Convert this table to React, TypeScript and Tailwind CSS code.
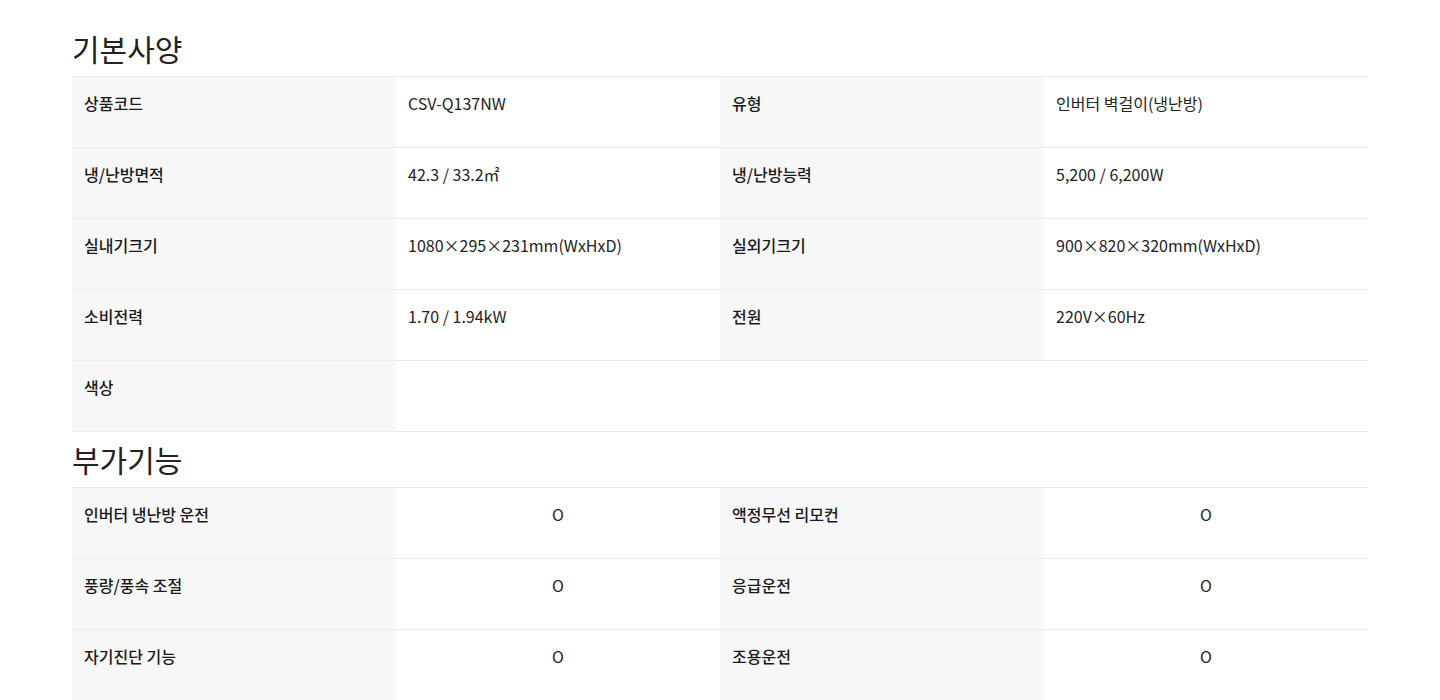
const FONT = "font-['Noto_Sans_CJK_KR','Noto_Sans',sans-serif]";

type Cell = { label: string; value?: string };

const specs: Cell[][] = [
  [
    { label: '상품코드', value: 'CSV-Q137NW' },
    { label: '유형', value: '인버터 벽걸이(냉난방)' },
  ],
  [
    { label: '냉/난방면적', value: '42.3 / 33.2㎡' },
    { label: '냉/난방능력', value: '5,200 / 6,200W' },
  ],
  [
    { label: '실내기크기', value: '1080×295×231mm(WxHxD)' },
    { label: '실외기크기', value: '900×820×320mm(WxHxD)' },
  ],
  [
    { label: '소비전력', value: '1.70 / 1.94kW' },
    { label: '전원', value: '220V×60Hz' },
  ],
];

const features: Cell[][] = [
  [
    { label: '인버터 냉난방 운전', value: 'O' },
    { label: '액정무선 리모컨', value: 'O' },
  ],
  [
    { label: '풍량/풍속 조절', value: 'O' },
    { label: '응급운전', value: 'O' },
  ],
  [
    { label: '자기진단 기능', value: 'O' },
    { label: '조용운전', value: 'O' },
  ],
];

function Label({ children }: { children: string }) {
  return (
    <div className="h-[70px] bg-[#f7f7f7] px-3 pt-[15px] text-[16px] leading-[22px] font-medium text-[#1a1a1a]">
      {children}
    </div>
  );
}

function Value({ children, center }: { children?: string; center?: boolean }) {
  return (
    <div
      className={`h-[70px] px-3 pt-[15px] text-[16px] leading-[22px] text-[#222] ${center ? 'text-center' : ''}`}
    >
      {children}
    </div>
  );
}

function Row({ cells, center }: { cells: Cell[]; center?: boolean }) {
  return (
    <div className="grid grid-cols-4 border-b border-[#ebebeb]">
      {cells.map((c) => (
        <div key={c.label} className="contents">
          <Label>{c.label}</Label>
          <Value center={center}>{c.value}</Value>
        </div>
      ))}
    </div>
  );
}

function Title({ children }: { children: string }) {
  return (
    <h2 className="h-[55px] text-[30px] leading-[55px] font-normal text-[#222]">{children}</h2>
  );
}

export default function App() {
  return (
    <div className={`min-h-[700px] bg-white px-[72px] pt-[21px] ${FONT}`}>
      <Title>기본사양</Title>
      <div className="border-t border-[#ebebeb]">
        {specs.map((r, i) => (
          <Row key={i} cells={r} />
        ))}
        <div className="grid grid-cols-4 border-b border-[#ebebeb]">
          <Label>색상</Label>
          <div className="col-span-3" />
        </div>
      </div>
      <Title>부가기능</Title>
      <div className="border-t border-[#ebebeb]">
        {features.map((r, i) => (
          <Row key={i} cells={r} center />
        ))}
      </div>
    </div>
  );
}
